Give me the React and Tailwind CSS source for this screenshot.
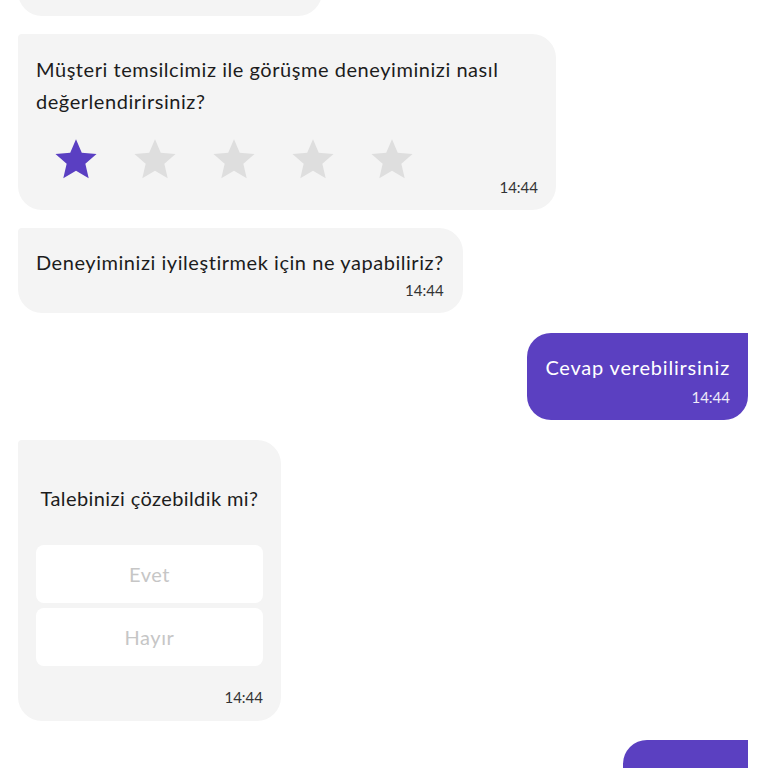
import React from "react";

const font = { fontFamily: "Lato, 'Open Sans', sans-serif" };

function Star({ active }) {
  return (
    <svg viewBox="0 0 24 24" className="w-[44px] h-[44px]">
      <path
        d="M12 1.2l3.15 7.4 8.05.7-6.1 5.3 1.83 7.9L12 18.35 5.07 22.5l1.83-7.9L.8 9.3l8.05-.7z"
        fill={active ? "#5a3fc2" : "#dedede"}
      />
    </svg>
  );
}

export default function App() {
  const stars = [true, false, false, false, false];

  return (
    <div className="w-[768px] h-[768px] overflow-hidden bg-white" style={font}>
      <div className="flex flex-col pl-[18px] pr-[20px]">
        <div className="w-[304px] h-[60px] -mt-[44px] bg-[#f4f4f4] rounded-b-[24px]" />

        <div className="mt-[18px] w-[538px] bg-[#f4f4f4] rounded-[24px] rounded-tl-[4px] pt-[19px] pb-[14px] px-[18px]">
          <p className="text-[20px] leading-[32px] tracking-[0.55px] text-[#1c1c1c]">
            Müşteri temsilcimiz ile görüşme deneyiminizi nasıl değerlendirirsiniz?
          </p>
          <div className="flex gap-[35px] pl-[18px] mt-[20px]">
            {stars.map((a, i) => (
              <Star key={i} active={a} />
            ))}
          </div>
          <div className="-mt-[3px] text-right text-[15px] leading-[18px] text-[#333]">14:44</div>
        </div>

        <div className="mt-[18px] self-start bg-[#f4f4f4] rounded-[24px] rounded-tl-[4px] pt-[18px] pb-[13px] pl-[18px] pr-[19px]">
          <p className="text-[20px] leading-[32px] tracking-[0.55px] text-[#1c1c1c]">
            Deneyiminizi iyileştirmek için ne yapabiliriz?
          </p>
          <div className="mt-[2px] text-right text-[15px] leading-[20px] text-[#333]">14:44</div>
        </div>

        <div className="mt-[20px] self-end bg-[#5b40c1] rounded-[24px] rounded-tr-none pt-[18px] pb-[13px] px-[18px]">
          <p className="text-[20px] leading-[32px] tracking-[0.8px] text-white">Cevap verebilirsiniz</p>
          <div className="mt-[4px] text-right text-[15px] leading-[20px] text-white/90">14:44</div>
        </div>

        <div className="mt-[20px] w-[263px] bg-[#f4f4f4] rounded-[24px] rounded-tl-[4px] pt-[42px] pb-[14px] px-[18px]">
          <p className="text-center text-[20px] leading-[32px] tracking-[0.4px] text-[#1c1c1c]">
            Talebinizi çözebildik mi?
          </p>
          <div className="mt-[31px] flex flex-col gap-[5px]">
            <button className="h-[58px] w-full bg-white rounded-[8px] text-[20px] tracking-[0.55px] text-[#c6c6c6]">
              Evet
            </button>
            <button className="h-[58px] w-full bg-white rounded-[8px] text-[20px] tracking-[0.55px] text-[#c6c6c6]">
              Hayır
            </button>
          </div>
          <div className="mt-[21px] text-right text-[15px] leading-[20px] text-[#333]">14:44</div>
        </div>

        <div className="mt-[19px] self-end w-[125px] bg-[#5b40c1] rounded-[24px] rounded-tr-none pt-[18px] pb-[14px] px-[18px]">
          <p className="text-[20px] leading-[32px] tracking-[0.55px] text-white">Hayır</p>
          <div className="mt-[4px] text-right text-[15px] leading-[20px] text-white/90">14:44</div>
        </div>
      </div>
    </div>
  );
}
